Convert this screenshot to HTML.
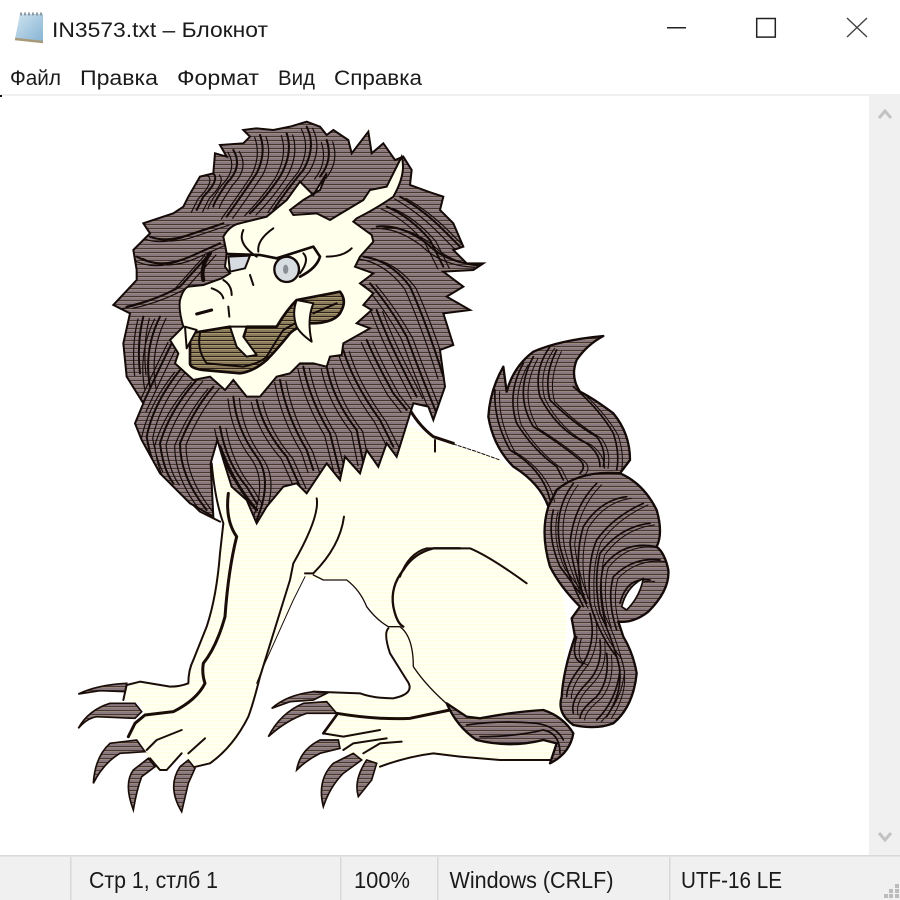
<!DOCTYPE html>
<html lang="ru"><head><meta charset="utf-8"><title>IN3573.txt – Блокнот</title>
<style>html,body{margin:0;padding:0;background:#fff;width:900px;height:900px;overflow:hidden}svg{display:block}
text{font-family:"Liberation Sans","DejaVu Sans",sans-serif;fill:#1a1a1a}</style></head>
<body>
<svg width="900" height="900" viewBox="0 0 900 900" xmlns="http://www.w3.org/2000/svg">
<defs>
<pattern id="h" patternUnits="userSpaceOnUse" width="12" height="12">
<rect width="12" height="12" fill="#8a787f"/><rect y="6" width="12" height="3" fill="#46383a"/><rect y="9" width="12" height="3" fill="#9a8878"/>
</pattern>
<pattern id="b" patternUnits="userSpaceOnUse" width="12" height="12">
<rect width="12" height="12" fill="#8a7a5c"/><rect y="6" width="12" height="3" fill="#2c2218"/><rect y="9" width="12" height="3" fill="#a8986e"/>
</pattern>
<pattern id="c" patternUnits="userSpaceOnUse" width="4" height="4">
<rect width="4" height="4" fill="#ffffe6"/><rect y="2" width="4" height="2" fill="#fffff4"/>
</pattern>
<linearGradient id="ic" x1="0" y1="0" x2="1" y2="1"><stop offset="0" stop-color="#cfe3ef"/><stop offset="1" stop-color="#86b4d4"/></linearGradient>
<path id="mp" d="M430 60L470 55 520 60 570 50 620 35 660 50 680 75 700 60 745 90 755 130 805 65 815 130 850 100 885 150 910 140 935 180 930 225 985 245 1030 260 1020 300 1060 340 1090 410 1060 420 1100 460 1150 460 1120 480 1030 485 1090 530 1040 560 1110 600 1030 610 1060 705 1020 720 1035 830 1000 930 985 890 940 880 915 960 890 1040 860 1000 835 1070 800 1020 780 1090 735 1040 720 1110 680 1060 620 1150 590 1120 550 1130 500 1190 470 1240 440 1170 395 1130 370 1050 352 990 332 1060 340 1220 270 1180 180 1090 125 990 105 940 130 880 80 800 70 700 90 610 40 585 110 510 110 480 100 420 150 370 130 340 220 310 250 290 265 260 300 200 340 190 345 130 380 140 360 105 430 100 450 80Z"/>
<path id="t1" d="M610 48Q480 60 400 95Q340 140 320 215L310 140Q270 210 265 290Q280 380 340 440Q420 490 445 560L470 510Q540 460 660 460L690 420Q690 340 640 280Q580 235 540 215Q510 170 530 120Q560 75 610 48Z"/>
<path id="t2" d="M445 560Q420 640 450 740Q480 800 540 860L515 895 525 950Q490 1050 485 1130Q470 1180 520 1215Q590 1230 640 1210Q700 1160 710 1060Q700 1000 670 950L655 905Q700 910 745 875Q810 810 805 750Q795 700 770 680Q790 640 770 570Q730 490 660 460Q540 450 470 510Z"/>
<clipPath id="mc"><use href="#mp"/></clipPath>
<clipPath id="tc"><use href="#t1"/><use href="#t2"/></clipPath>
<g id="mh">
<path d="M480 75Q500 130 470 190Q430 250 380 320"/>
<path d="M560 70Q580 130 540 200Q500 260 450 310"/>
<path d="M620 50Q650 110 610 180Q560 240 520 300"/>
<path d="M680 90Q700 150 660 200"/>
<path d="M400 120Q430 170 380 220Q340 280 340 290"/>
<path d="M340 190Q360 210 310 260L290 300"/>
<path d="M150 380Q200 400 280 370L370 340"/>
<path d="M110 440Q180 480 270 440L360 400"/>
<path d="M80 590Q170 570 240 530L330 430"/>
<path d="M130 620Q110 700 120 790"/>
<path d="M180 620Q130 720 150 830"/>
<path d="M220 690Q180 770 120 900"/>
<path d="M340 830Q280 900 240 1000Q240 1100 320 1200"/>
<path d="M290 810Q210 900 180 1000Q190 1080 220 1120"/>
<path d="M240 780Q160 880 140 980Q150 1040 170 1080"/>
<path d="M400 860Q410 960 470 1040Q520 1110 470 1230"/>
<path d="M360 950Q380 1060 440 1130L470 1180"/>
<path d="M470 870Q490 960 560 1040L600 1130"/>
<path d="M540 810Q560 920 620 1020L640 1080"/>
<path d="M610 770Q630 870 690 970L720 1090"/>
<path d="M680 770Q700 870 770 960L790 1060"/>
<path d="M730 720Q760 820 840 930L880 1010"/>
<path d="M830 350Q900 340 980 400Q1040 460 1140 465"/>
<path d="M790 440Q870 450 930 530Q980 640 1030 800"/>
<path d="M810 520Q870 590 920 680Q960 790 1010 910"/>
<path d="M830 600Q860 680 900 760L950 860"/>
<path d="M800 690Q830 760 880 850L920 900"/>
<path d="M900 260Q970 300 1030 360L1080 410"/>
<path d="M860 290Q930 320 990 390L1030 470"/>
</g>
<g id="th">
<path d="M450 80Q400 150 420 230Q470 330 560 370Q600 400 600 440"/>
<path d="M470 90Q430 170 450 240Q520 310 590 350Q620 390 610 440"/>
<path d="M400 110Q340 220 400 320Q480 370 540 420Q560 440 540 460"/>
<path d="M370 130Q320 220 350 310Q400 390 470 440L490 480"/>
<path d="M285 210Q280 300 330 390Q430 450 450 540"/>
<path d="M520 200Q600 270 640 340Q660 400 650 450"/>
<path d="M460 570Q440 650 480 740L540 820"/>
<path d="M520 490Q460 570 480 680Q500 760 550 860"/>
<path d="M590 490Q520 560 510 670Q520 760 560 850"/>
<path d="M680 530Q600 540 550 620Q520 720 550 830"/>
<path d="M730 550Q640 590 590 660Q560 730 570 850Q600 950 650 1010Q680 1100 620 1190"/>
<path d="M750 610Q660 620 600 700Q580 780 600 880Q640 960 660 1050Q650 1140 590 1200"/>
<path d="M770 680Q670 660 610 740Q590 820 620 920"/>
<path d="M780 720Q700 710 640 770Q620 840 650 930"/>
<path d="M750 780Q680 770 660 850"/>
<path d="M530 950Q510 1020 550 1030"/>
<path d="M570 880Q590 960 550 1030Q500 1090 500 1130"/>
<path d="M600 960Q610 1040 560 1090Q510 1140 520 1180"/>
<path d="M620 1000Q630 1080 590 1130Q540 1170 540 1195"/>
</g>
</defs>
<rect width="900" height="900" fill="#fff"/>
<!-- title -->
<path d="M20 14L43 14 43 42 15 39Z" fill="url(#ic)"/>
<path d="M15 39L43 42" stroke="#a89a78" stroke-width="2.5" fill="none"/>
<path d="M20 14L43 14" stroke="#8f9aa3" stroke-width="3" stroke-dasharray="2 2" fill="none"/>
<text x="52" y="37" font-size="21.5" textLength="216" lengthAdjust="spacingAndGlyphs">IN3573.txt – Блокнот</text>
<path d="M667 27.7H686" stroke="#222" stroke-width="1.5"/>
<rect x="756.7" y="18.5" width="18.6" height="18.6" fill="none" stroke="#222" stroke-width="1.5"/>
<path d="M847 18L867 37M867 18L847 37" stroke="#444" stroke-width="1.4"/>
<!-- menu -->
<g font-size="21.5">
<text x="10" y="85" textLength="51" lengthAdjust="spacingAndGlyphs">Файл</text>
<text x="80" y="85" textLength="78" lengthAdjust="spacingAndGlyphs">Правка</text>
<text x="177" y="85" textLength="82" lengthAdjust="spacingAndGlyphs">Формат</text>
<text x="278" y="85" textLength="37" lengthAdjust="spacingAndGlyphs">Вид</text>
<text x="334" y="85" textLength="88" lengthAdjust="spacingAndGlyphs">Справка</text>
</g>
<rect y="94" width="900" height="2" fill="#f0f0f0"/>
<rect x="0" y="95" width="2" height="2" fill="#111"/>
<!-- scrollbar -->
<rect x="869" y="96" width="31" height="759" fill="#f0f0f0"/>
<path d="M879 118L885 111 891 118" fill="none" stroke="#c2c2c2" stroke-width="3"/>
<path d="M879 833L885 840 891 833" fill="none" stroke="#c2c2c2" stroke-width="3"/>

<!-- body fill -->
<path fill="url(#c)" d="M213 467L223 527 220 553 207 627 193 660 188 683 170 687 140 682 127 687 123 700 140 703 145 713 135 723 128 737 140 740 145 752 157 770 167 770 183 753 192 767 210 763 233 747 248 717 257 687 280 627 303 577 323 580 347 580 360 593 377 617 388 627 383 633 393 653 410 683 410 693 393 698 367 697 353 692 313 692 323 700 337 713 323 733 343 750 380 770 387 763 427 753 460 757 500 760 550 760 560 727 567 620 547 510 533 483 500 460 437 440 400 420 300 420Z"/>

<!-- body lines -->
<g transform="translate(60,420) scale(.33333)" fill="none" stroke="#1a0d08" stroke-width="6" stroke-linejoin="round" stroke-linecap="round">
<path d="M455 130Q465 240 490 310L480 400Q470 530 440 620L400 720Q385 750 385 790Q360 800 330 800L240 785 200 795 190 840"/>
<path stroke-width="9" d="M505 220Q495 300 530 350Q505 450 495 590Q470 680 430 730Q425 760 435 790Q410 840 340 875L255 885 225 910 205 950"/>
<path d="M770 235Q780 290 700 430L690 480 600 770Q580 850 565 890Q520 980 450 1030L395 1043"/>
<path stroke-width="3" d="M735 470L700 540 610 740 590 790"/>
<path d="M852 290Q840 380 760 460L735 460"/>
<path stroke-width="4" d="M760 465L790 480 860 480Q900 510 920 560Q950 600 985 620L1020 620Q1060 650 1060 740Q1100 800 1170 860"/>
<path d="M985 625Q970 640 990 700L1040 780Q1070 820 1000 835Q940 835 900 820L760 815"/>
<path stroke-width="7" d="M1200 385L1120 385Q1060 400 1030 450Q990 500 1000 560Q1010 610 1030 620"/>
<path stroke-width="9" d="M830 880Q950 900 1050 895L1170 870"/>
<path stroke-width="8" d="M830 885L790 940"/>
<path d="M790 940L850 950 960 930M850 990L880 970 980 955M910 1000L960 970 1025 965"/>
<path d="M960 1040Q1040 1010 1120 1000L1200 1010"/>
<path d="M260 990L290 960 365 930M385 1000L435 955M270 1015L300 1050 320 1050 365 1000"/>
<path d="M375 230L420 275 480 305"/>
<g fill="url(#h)" stroke-width="5" stroke-linejoin="miter">
<path d="M55 822Q110 795 200 790L195 815 120 812Z"/>
<path d="M55 925Q85 870 150 850L225 850 245 875 225 895 110 890Q80 895 55 925Z"/>
<path d="M100 1090Q105 1010 150 970L230 960 255 995 180 1000Q130 1030 100 1090Z"/>
<path d="M220 1170Q190 1090 220 1050L265 1015 285 1040 245 1070Q230 1110 220 1170Z"/>
<path d="M365 1175Q320 1100 360 1040L385 1020 405 1045 385 1090Z"/>
<path d="M635 865Q680 825 760 815L800 820 760 840 690 845Z"/>
<path d="M625 950Q660 880 730 850L800 845 830 880 740 880Q680 900 625 950Z"/>
<path d="M710 1050Q720 990 780 960L835 960 840 985 780 1000Q740 1020 710 1050Z"/>
<path d="M790 1160Q770 1080 820 1030L880 1000 905 1020 850 1060Q810 1100 790 1160Z"/>
<path d="M895 1130Q880 1080 920 1020L950 1030 935 1080Z"/>
</g>
</g>

<!-- tail -->
<g transform="translate(400,320) scale(.33333)" stroke-linejoin="round" stroke-linecap="round">
<g fill="none" stroke="#1a0d08" stroke-width="6">
<path d="M180 1310L300 1320 450 1320"/>
<path stroke-width="3" stroke-dasharray="10 5" d="M160 372L230 395 300 420"/>
<path stroke-width="9" d="M30 270Q60 320 100 350L160 370"/>
<path d="M105 360V395"/>
<path stroke-width="6" d="M0 770Q25 700 80 685L210 685Q270 710 380 790"/>
</g>
<use href="#t1" fill="url(#h)" stroke="#140a08" stroke-width="7"/>
<use href="#t2" fill="url(#h)" stroke="#140a08" stroke-width="7"/>
<g clip-path="url(#tc)" fill="none" stroke="#140a08">
<use href="#th" stroke-width="5"/>
<use href="#th" stroke-width="3" transform="translate(14,5)"/>
</g>
<path fill="#fff" stroke="#140a08" stroke-width="5" d="M665 860Q680 800 730 775Q720 830 680 870Z"/>
<path fill="url(#h)" stroke="#140a08" stroke-width="7" d="M140 1150Q170 1220 230 1260Q330 1285 430 1260L470 1270 450 1330Q510 1300 520 1240Q490 1190 430 1170Q340 1175 240 1195L200 1190Z"/>
<g fill="none" stroke="#140a08" stroke-width="5">
<path d="M200 1215Q300 1200 410 1210Q470 1220 490 1260"/>
<path d="M240 1250Q350 1250 430 1230Q480 1240 480 1300"/>
</g>
</g>

<!-- mane and face -->
<g transform="translate(100,110) scale(.33333)" stroke-linejoin="round" stroke-linecap="round">
<use href="#mp" stroke-linejoin="miter" fill="url(#h)" stroke="#140a08" stroke-width="6"/>
<g clip-path="url(#mc)" fill="none" stroke="#140a08">
<use href="#mh" stroke-width="6"/>
<use href="#mh" stroke-width="3.5" transform="translate(18,5)"/>
<use href="#mh" stroke-width="3.5" transform="translate(-16,7)"/>
</g>
<g fill="none" stroke="#140a08">
<path stroke-width="12" d="M330 430Q300 470 310 510"/>
<path stroke-width="9" d="M360 1010Q400 1120 470 1200"/>
</g>
<!-- face -->
<path fill="url(#c)" stroke="#140a08" stroke-width="6" stroke-linejoin="miter" d="M905 140Q920 190 880 260Q830 295 770 325L760 335 815 375 820 395 780 440 765 470 820 490 780 520 820 550 790 585 815 600 770 640 810 655 730 700 725 735 690 740 680 770 640 760 600 760 570 790 530 800 480 860 440 860 400 810 375 840 330 800 280 810 225 760 235 730 210 690 250 650Q235 600 240 570Q250 535 265 530L310 525 365 505 390 490 375 470 380 430 370 380Q390 345 420 340L500 320 560 270 600 215 640 255 680 190 660 240 610 270 570 300 580 315 650 310 690 330 790 270 810 240 860 230 880 190Z"/>
<!-- mouth -->
<path fill="url(#b)" stroke="#140a08" stroke-width="8" d="M270 670L390 650 425 700 440 650 530 650Q560 600 590 570L720 545Q740 570 725 600Q710 640 630 640Q590 650 570 670Q530 720 500 750Q460 785 420 790L310 780Q270 775 270 760Z"/>
<g fill="none" stroke="#140a08" stroke-width="6">
<path d="M300 670Q290 720 320 760L430 770Q480 760 500 740Q530 690 550 660L620 620"/>
<path d="M640 610L710 580"/>
</g>
<path fill="url(#c)" stroke="#140a08" stroke-width="6" d="M590 570L640 580Q620 630 635 695Q600 670 590 650Q575 610 590 570Z"/>
<path fill="url(#c)" stroke="#140a08" stroke-width="6" d="M390 650L440 650 430 680 470 735 440 740 410 710Z"/>
<path fill="url(#c)" stroke="#140a08" stroke-width="6" d="M255 650L290 660 260 715Z"/>
<!-- eyes -->
<path fill="#d5dbe0" stroke="#140a08" stroke-width="6" d="M385 440L450 437 435 475 390 485Z"/>
<ellipse cx="560" cy="478" rx="37" ry="38" fill="#d8dde2" stroke="#140a08" stroke-width="7"/>
<ellipse cx="557" cy="478" rx="8" ry="14" fill="#8a8f96"/>
<g fill="none" stroke="#140a08" stroke-width="6">
<path stroke-width="8" d="M380 432L480 435 530 445 640 410 660 440Q650 475 600 500"/>
<path d="M610 430Q630 450 600 490"/>
<path d="M430 360Q410 400 470 440"/>
<path d="M520 355Q470 390 475 425"/>
<path d="M680 440Q730 440 755 415"/>
<path stroke-width="9" d="M290 612L335 600"/>
<path d="M335 535Q365 545 370 565M370 510Q395 525 395 555"/>
<path d="M450 495L460 525"/>
<path d="M385 590L388 620"/>
</g>
</g>

<!-- status bar -->
<rect y="855" width="900" height="45" fill="#f0f0f0"/>
<rect y="855" width="900" height="1.5" fill="#d9d9d9"/>
<g fill="#d9d9d9"><rect x="70" y="857" width="1.5" height="43"/><rect x="340" y="857" width="1.5" height="43"/><rect x="437" y="857" width="1.5" height="43"/><rect x="669" y="857" width="1.5" height="43"/></g>
<g font-size="23.5">
<text x="89" y="888" textLength="129" lengthAdjust="spacingAndGlyphs">Стр 1, стлб 1</text>
<text x="354" y="888" textLength="56" lengthAdjust="spacingAndGlyphs">100%</text>
<text x="449.5" y="888" textLength="164" lengthAdjust="spacingAndGlyphs">Windows (CRLF)</text>
<text x="681" y="888" textLength="101" lengthAdjust="spacingAndGlyphs">UTF-16 LE</text>
</g>
<g fill="#bcbcbc"><rect x="884" y="894" width="4" height="4"/><rect x="889" y="894" width="4" height="4"/><rect x="895" y="894" width="4" height="4"/><rect x="889" y="889" width="4" height="4"/><rect x="895" y="889" width="4" height="4"/><rect x="895" y="884" width="4" height="4"/></g>
</svg>
</body></html>
